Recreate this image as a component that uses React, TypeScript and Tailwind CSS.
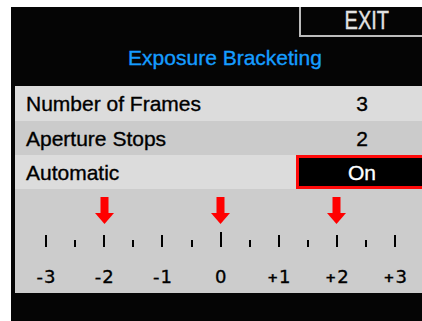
import React from "react";

const ticks = Array.from({ length: 13 }, (_, i) => i);
const labels = [
  { s: "-", d: "3" },
  { s: "-", d: "2" },
  { s: "-", d: "1" },
  { s: "", d: "0" },
  { s: "+", d: "1" },
  { s: "+", d: "2" },
  { s: "+", d: "3" },
];
const arrowAt = new Set([2, 6, 10]);

function Arrow() {
  return (
    <svg width="19" height="27" viewBox="0 0 19 27">
      <rect x="5.5" y="0" width="8" height="17" fill="#ff0000" />
      <polygon points="0,16 19,16 9.5,27" fill="#ff0000" />
    </svg>
  );
}

export default function App() {
  return (
    <div className="w-[422px] h-[321px] bg-white pl-[11px] pt-[7px] overflow-hidden">
      <div className="h-full bg-[#050505] flex flex-col font-['Liberation_Sans',Arial,sans-serif] [-webkit-text-stroke:0.35px_currentColor]">
        {/* header */}
        <div className="h-[30px] flex justify-end">
          <div className="w-[123px] h-full border-l-2 border-b-2 border-[#bcbcbc] flex items-center justify-center pl-[10px] pb-[2px]">
            <span className="text-[25px] leading-[25px] text-[#e2e2e2] scale-x-[0.8] inline-block">EXIT</span>
          </div>
        </div>
        {/* title */}
        <div className="h-[49px] pt-[10px] pl-[17px] text-center">
          <span className="text-[21px] leading-[21px] text-[#159dff]">Exposure Bracketing</span>
        </div>
        {/* rows */}
        <div className="pl-[4px] flex flex-col">
          <div className="h-[35px] bg-[#dcdcdc] flex items-center text-black text-[21px] leading-[21px]">
            <span className="pl-[11px] flex-1">Number of Frames</span>
            <span className="w-[126px] text-center pl-[6px]">3</span>
          </div>
          <div className="h-[34px] bg-[#cbcbcb] flex items-center text-black text-[21px] leading-[21px]">
            <span className="pl-[11px] flex-1">Aperture Stops</span>
            <span className="w-[126px] text-center pl-[6px]">2</span>
          </div>
          <div className="h-[34px] bg-[#dcdcdc] flex items-stretch text-black text-[21px] leading-[21px]">
            <span className="pl-[11px] flex-1 flex items-center">Automatic</span>
            <div className="w-[129px] -mr-[3px] bg-black border-[3px] border-[#ff0a0a] flex items-center justify-center pl-[3px]">
              <span className="text-white">On</span>
            </div>
          </div>
          {/* scale */}
          <div className="h-[104px] bg-[#cccccc] flex flex-col">
            <div className="pl-[16.5px] pt-[8px] grid grid-cols-[repeat(13,29.1px)] h-[35px]">
              {ticks.map((i) => (
                <div key={i} className="flex justify-center">
                  {arrowAt.has(i) ? <Arrow /> : null}
                </div>
              ))}
            </div>
            <div className="pl-[16.5px] mt-[8px] grid grid-cols-[repeat(13,29.1px)] h-[15px] items-end">
              {ticks.map((i) => (
                <div key={i} className="flex justify-center items-end h-full">
                  <div
                    className={
                      i === 6
                        ? "w-[2px] h-[15px] bg-black"
                        : i % 2 === 0
                        ? "w-[2px] h-[12px] bg-black"
                        : "w-[2px] h-[7px] bg-black"
                    }
                  />
                </div>
              ))}
            </div>
            <div className="pl-[2px] mt-[21px] grid grid-cols-[repeat(7,58.2px)] font-['DejaVu_Sans',sans-serif] text-[18px] leading-[18px] text-black">
              {labels.map((l, j) => (
                <div key={j} className="flex justify-center items-center gap-[1px]">
                  {l.s === "+" ? (
                    <span className="text-[13px] leading-[13px] font-bold">+</span>
                  ) : l.s === "-" ? (
                    <span>-</span>
                  ) : null}
                  <span>{l.d}</span>
                </div>
              ))}
            </div>
          </div>
        </div>
      </div>
    </div>
  );
}
